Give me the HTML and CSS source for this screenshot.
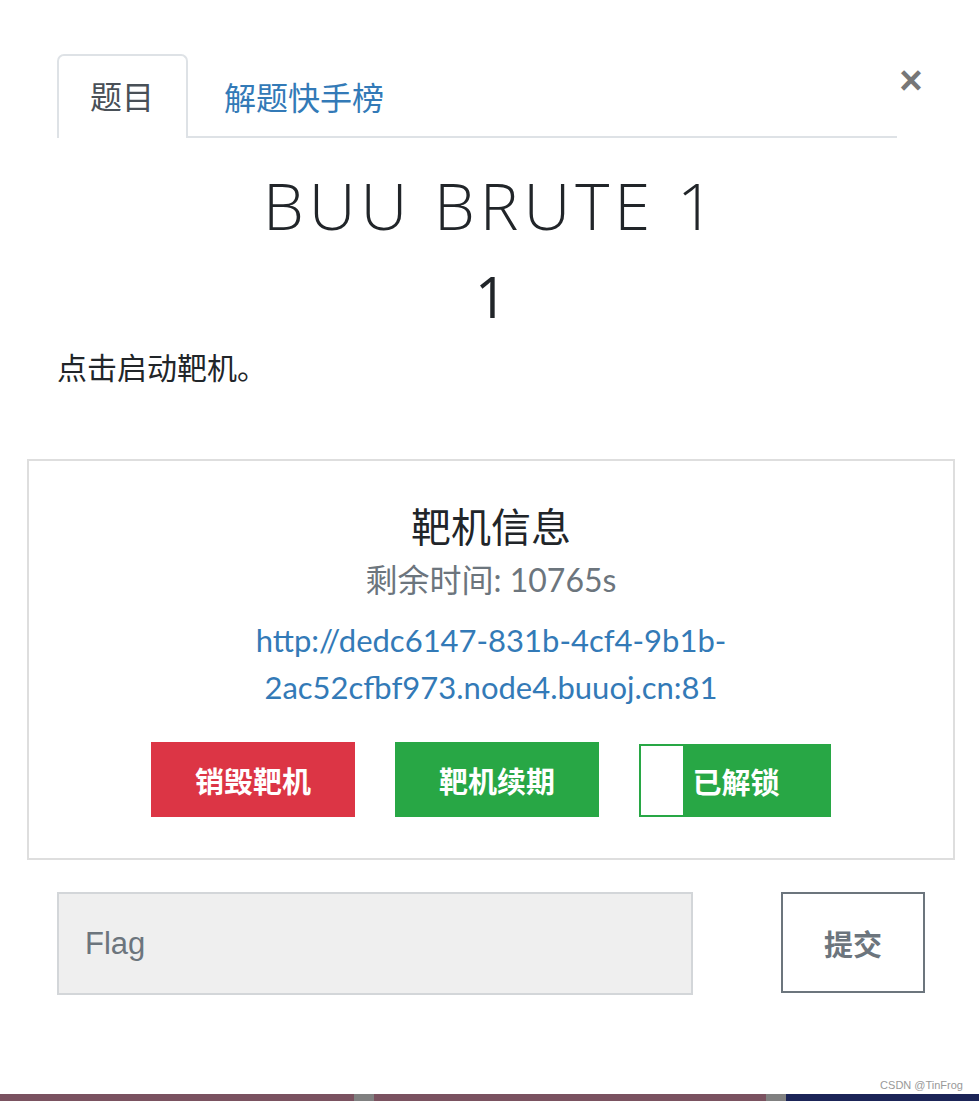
FILE: index.html
```html
<!DOCTYPE html>
<html lang="zh-CN">
<head>
    <meta charset="UTF-8">
    <meta name="viewport" content="width=device-width, initial-scale=1.0">
    <title>BUU BRUTE 1</title>
    <link rel="stylesheet" href="styles.css">
</head>
<body>
<div class="page">
    <div class="modal-header">
        <ul class="nav-tabs">
            <li class="tab active">题目</li>
            <li class="tab"><a href="#">解题快手榜</a></li>
        </ul>
        <button class="close" type="button">&times;</button>
    </div>

    <div class="modal-body">
        <h2 class="challenge-name">BUU BRUTE 1</h2>
        <h3 class="challenge-value">1</h3>
        <p class="challenge-desc">点击启动靶机。</p>

        <div class="target-card">
            <h4>靶机信息</h4>
            <div class="remain">剩余时间: 10765s</div>
            <a class="target-url" href="#">http://dedc6147-831b-4cf4-9b1b-2ac52cfbf973.node4.buuoj.cn:81</a>
            <div class="target-actions">
                <button class="btn btn-danger" type="button">销毁靶机</button>
                <button class="btn btn-success" type="button">靶机续期</button>
                <div class="toggle">
                    <span class="toggle-handle"></span>
                    <span class="toggle-label">已解锁</span>
                </div>
            </div>
        </div>

        <form class="flag-form">
            <input type="text" class="flag-input" placeholder="Flag">
            <button type="button" class="btn-submit">提交</button>
        </form>
    </div>

    <div class="watermark">CSDN @TinFrog</div>
</div>
<div class="taskbar">
    <span class="seg seg-a"></span>
    <span class="seg seg-gap"></span>
    <span class="seg seg-b"></span>
    <span class="seg seg-gap"></span>
    <span class="seg seg-c"></span>
</div>
</body>
</html>
```

FILE: styles.css
```css
body {
    margin: 0;
    background-color: #ffffff;
    font-family: "Lato", "Noto Sans CJK SC", sans-serif;
    color: #212529;
}

.page {
    height: 1094px;
    display: flex;
    flex-direction: column;
}

/* header with tabs */
.modal-header {
    display: flex;
    align-items: flex-start;
    padding: 54px 0 0 57px;
}

.nav-tabs {
    list-style: none;
    margin: 0;
    padding: 0;
    width: 840px;
    display: flex;
    border-bottom: 2px solid #dee2e6;
}

.tab {
    font-family: "Noto Sans CJK SC", sans-serif;
    font-size: 32px;
    line-height: 47px;
    padding: 17px 32px 17px 34px;
    margin-bottom: -2px;
    border: 2px solid transparent;
    border-bottom: none;
}

.tab.active {
    color: #495057;
    background-color: #fff;
    border-color: #dee2e6;
    border-radius: 7px 7px 0 0;
    padding: 16px 32px 19px 31px;
}

.tab a {
    color: #337ab7;
    text-decoration: none;
}

.close {
    margin: 8px 0 0 0;
    padding: 0;
    width: 28px;
    background: none;
    border: none;
    font-family: "Liberation Sans", sans-serif;
    font-size: 40px;
    font-weight: bold;
    line-height: 36px;
    color: #777;
    cursor: pointer;
}

/* body */
.modal-body {
    padding: 0 24px 0 27px;
}

.challenge-name,
.challenge-value {
    font-family: "Open Sans", sans-serif;
    font-weight: 300;
    text-align: center;
    margin: 0;
    color: #212529;
}

.challenge-name {
    font-size: 65px;
    letter-spacing: 5px;
    line-height: 78px;
    margin-top: 28px;
}

.challenge-value {
    font-size: 56px;
    font-weight: 400;
    line-height: 68px;
    margin-top: 18px;
}

.challenge-desc {
    font-family: "Noto Sans CJK SC", sans-serif;
    font-size: 30px;
    line-height: 45px;
    margin: 14px 0 0 30px;
    text-spacing-trim: space-all;
}

.target-card {
    margin-top: 70px;
    border: 2px solid #dedede;
    padding: 40px 20px 41px;
    display: flex;
    flex-direction: column;
    align-items: center;
    text-align: center;
}

.target-card h4 {
    font-family: "Noto Sans CJK SC", sans-serif;
    font-weight: normal;
    font-size: 40px;
    line-height: 48px;
    margin: 0;
}

.remain {
    color: #6c757d;
    font-size: 32px;
    line-height: 45px;
    margin-top: 8px;
}

.target-url {
    color: #337ab7;
    text-decoration: none;
    font-size: 31px;
    line-height: 47px;
    margin-top: 15px;
}

.target-actions {
    display: flex;
    gap: 40px;
    align-items: flex-end;
    margin-top: 31px;
}

.btn {
    width: 204px;
    height: 75px;
    border: none;
    color: #fff;
    font-family: "Noto Sans CJK SC", sans-serif;
    font-size: 29px;
    font-weight: bold;
    cursor: pointer;
}

.btn-danger {
    background-color: #dc3545;
}

.btn-success {
    background-color: #28a745;
}

.toggle {
    width: 188px;
    height: 69px;
    border: 2px solid #28a745;
    background-color: #28a745;
    display: flex;
    align-items: center;
}

.toggle-handle {
    width: 42px;
    height: 69px;
    background-color: #fff;
}

.toggle-label {
    flex: 1;
    text-align: center;
    color: #fff;
    font-family: "Noto Sans CJK SC", sans-serif;
    font-size: 29px;
    font-weight: bold;
    padding-right: 40px;
}

/* flag form */
.flag-form {
    display: flex;
    justify-content: space-between;
    align-items: flex-start;
    margin: 32px 30px 0 30px;
}

.flag-input {
    width: 636px;
    height: 103px;
    box-sizing: border-box;
    background-color: #efefef;
    border: 2px solid #d3d6d9;
    padding: 0 26px;
    font-family: "Liberation Sans", sans-serif;
    font-size: 31px;
    outline: none;
}

.flag-input::placeholder {
    color: #6c757d;
}

.btn-submit {
    width: 144px;
    height: 101px;
    background-color: #fff;
    border: 2px solid #6c757d;
    color: #6c757d;
    font-family: "Noto Sans CJK SC", sans-serif;
    font-size: 29px;
    font-weight: bold;
    cursor: pointer;
}

.watermark {
    margin-top: auto;
    margin-bottom: 3px;
    padding-right: 16px;
    text-align: right;
    font-family: "Liberation Sans", sans-serif;
    font-size: 11px;
    color: #999;
}

/* strip at bottom of screenshot */
.taskbar {
    display: flex;
    height: 7px;
}

.seg-a {
    width: 354px;
    background-color: #7a5260;
}

.seg-gap {
    width: 20px;
    background-color: #808080;
}

.seg-b {
    width: 392px;
    background-color: #7a5260;
}

.seg-c {
    flex: 1;
    background-color: #1b2457;
}
```
